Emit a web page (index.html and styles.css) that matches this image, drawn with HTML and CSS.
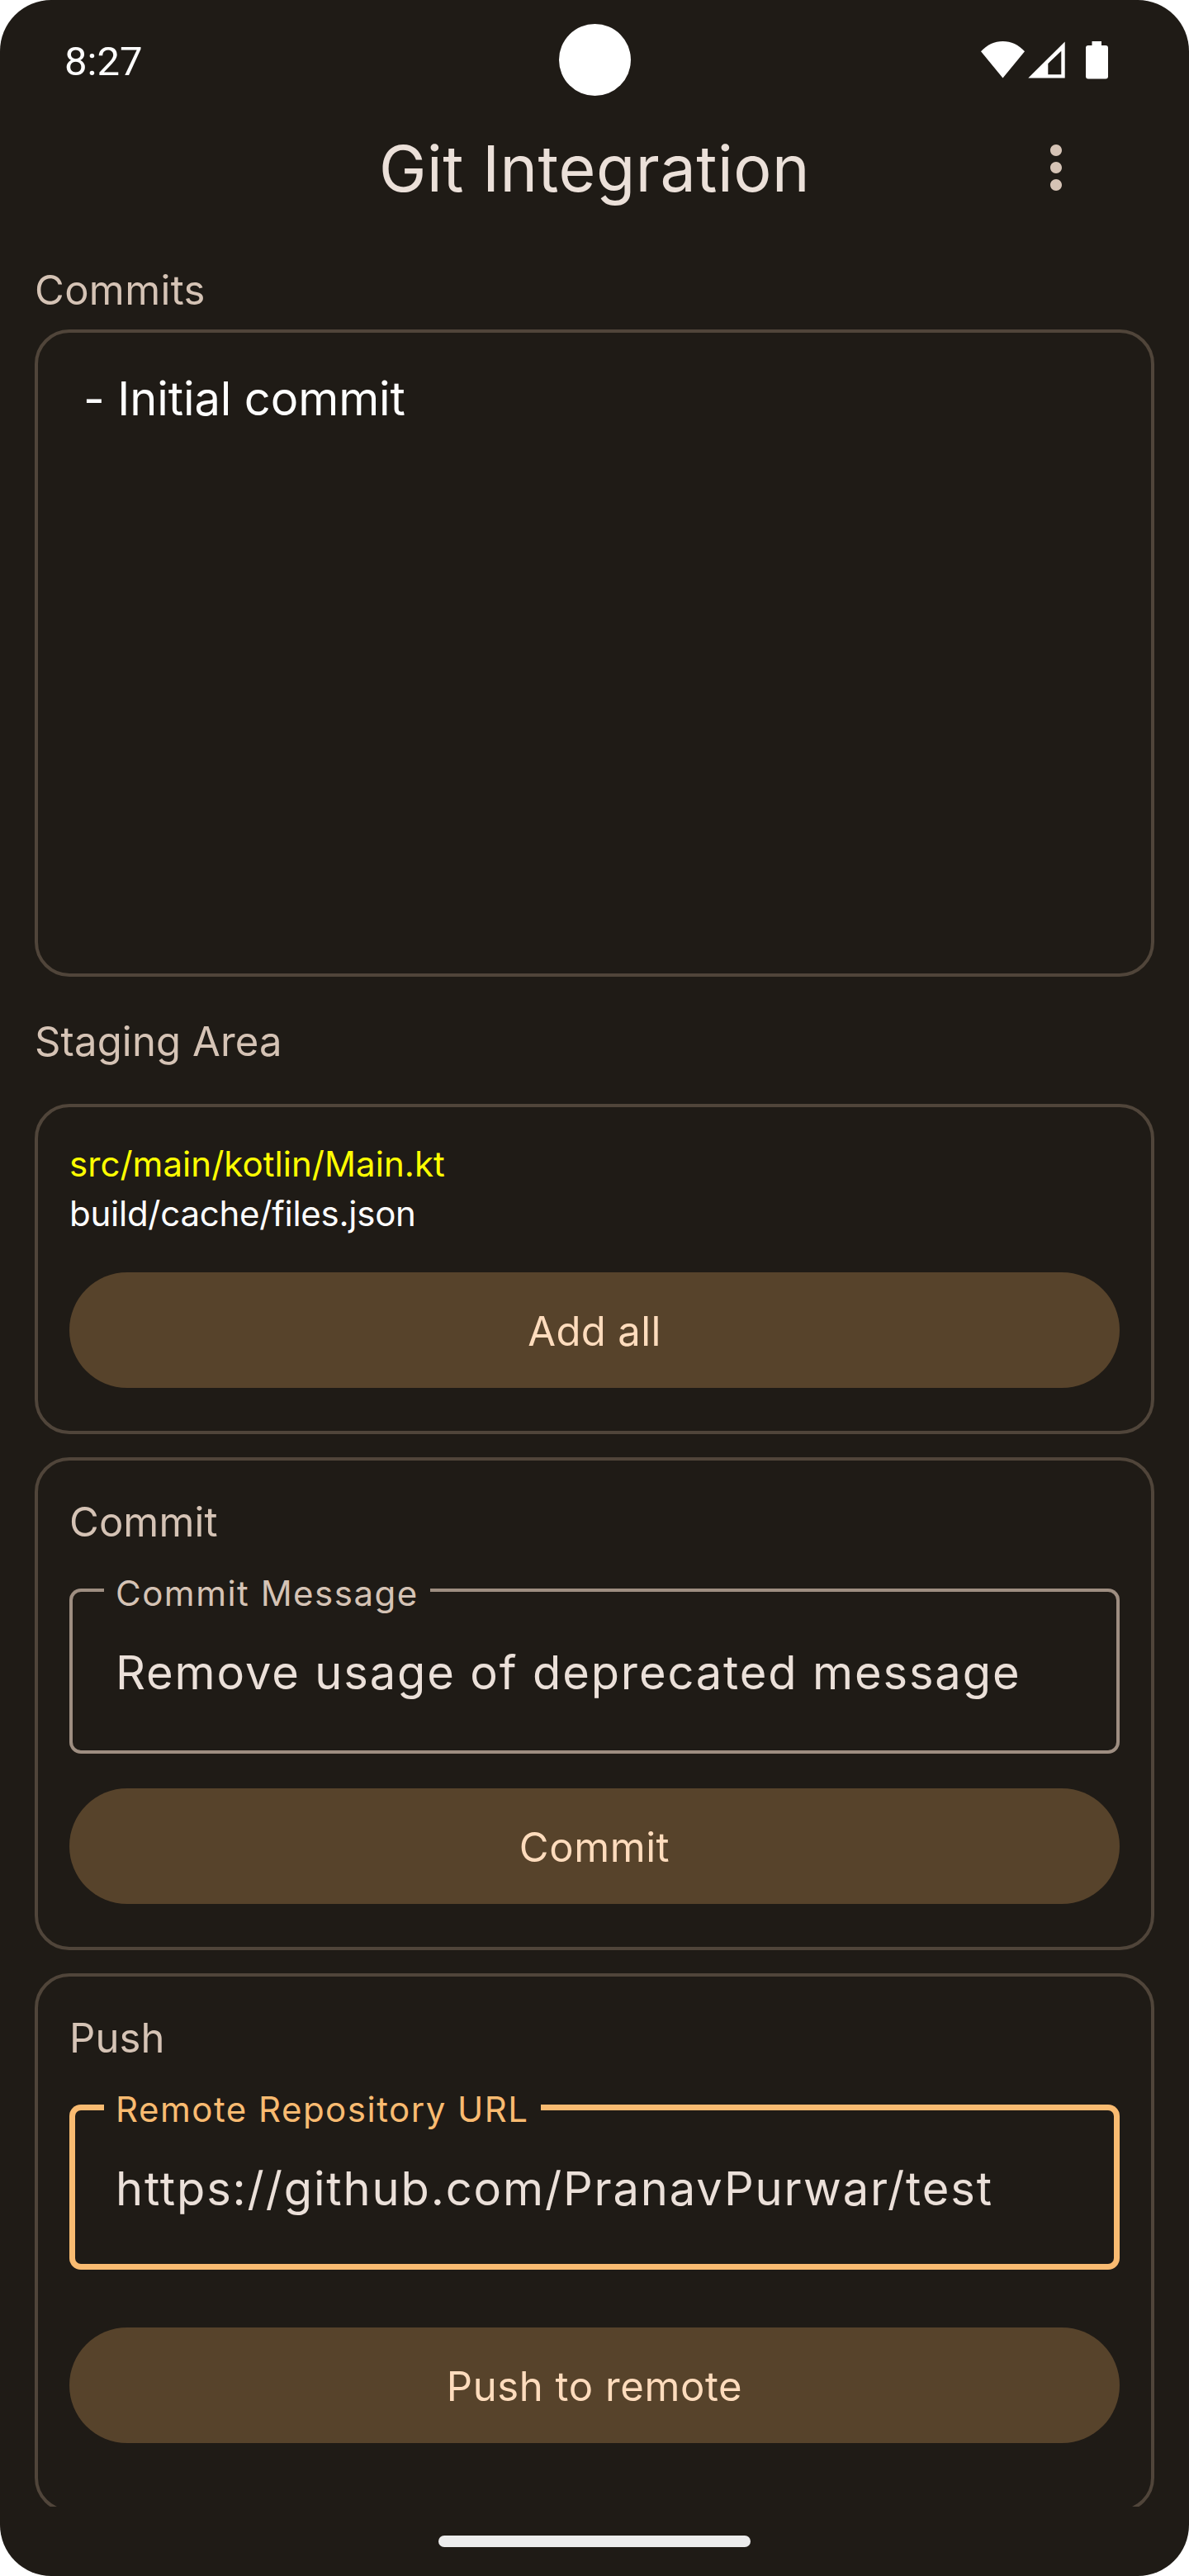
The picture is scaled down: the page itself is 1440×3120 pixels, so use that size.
FILE: index.html
```html
<!DOCTYPE html>
<html lang="en">
<head>
<meta charset="utf-8">
<title>Git Integration</title>
<link rel="stylesheet" href="styles.css">
</head>
<body>
<div class="phone">
  <div class="camera"></div>
  <header class="status-bar">
    <span class="clock">8:27</span>
    <svg class="status-icons" width="156" height="48" viewBox="0 0 156 48" fill="#fff" aria-hidden="true">
      <path d="M0 12.3C7.500 4 16.500 0 26.500 0S45.500 4 53 12.300L26.500 44.400Z"/>
      <path fill-rule="evenodd" d="M57.300 44.500L101.700 .5V44.500ZM81.300 27V40.300H97.300V11.700Z"/>
      <path d="M134.500 0H146V5H151a3 3 0 0 1 3 3V42.500a3 3 0 0 1-3 3H130a3 3 0 0 1-3-3V8a3 3 0 0 1 3-3H134.500Z"/>
    </svg>
  </header>
  <div class="app-bar">
    <h1 class="app-title">Git Integration</h1>
    <button class="menu" aria-label="More options">
      <svg width="84" height="84" viewBox="0 0 24 24" fill="currentColor"><path d="M12 8c1.100 0 2-.9 2-2s-.9-2-2-2-2 .9-2 2 .9 2 2 2zm0 2c-1.100 0-2 .9-2 2s.9 2 2 2 2-.9 2-2-.9-2-2-2zm0 6c-1.100 0-2 .9-2 2s.9 2 2 2 2-.9 2-2-.9-2-2-2z"/></svg>
    </button>
  </div>
  <main class="content">
    <h2 class="section-label">Commits</h2>
    <section class="card commits">
      <p class="commit-entry">- Initial commit</p>
    </section>
    <h2 class="section-label staging-label">Staging Area</h2>
    <section class="card staging">
      <p class="file changed">src/main/kotlin/Main.kt</p>
      <p class="file untracked">build/cache/files.json</p>
      <button class="btn">Add all</button>
    </section>
    <section class="card form commit">
      <h3 class="card-title">Commit</h3>
      <div class="field">
        <span class="field-label">Commit Message</span>
        <span class="field-value">Remove usage of deprecated message</span>
      </div>
      <button class="btn">Commit</button>
    </section>
    <section class="card form push">
      <h3 class="card-title">Push</h3>
      <div class="field focused">
        <span class="field-label">Remote Repository URL</span>
        <span class="field-value">https://github.com/PranavPurwar/test</span>
      </div>
      <button class="btn">Push to remote</button>
    </section>
  </main>
  <footer class="nav-bar"><div class="nav-handle"></div></footer>
</div>
</body>
</html>
```
FILE: styles.css
```css
:root {
  --bg: #1f1b16;
  --text: #ebe0d9;
  --text-variant: #d5c3b5;
  --outline: #9e8e81;
  --outline-variant: #50453a;
  --primary: #f9bb71;
  --tonal: #57432b;
  --on-tonal: #ffdcbd;
}

* { box-sizing: border-box; margin: 0; padding: 0; }

body { background: #fff; font-family: Inter, sans-serif; font-weight: 400; }

button { border: 0; background: none; font: inherit; }

.phone {
  position: relative;
  display: flex;
  flex-direction: column;
  width: 1440px;
  height: 3120px;
  border-radius: 62px;
  overflow: hidden;
  background: var(--bg);
  color: var(--text);
}

.camera {
  position: absolute;
  top: 29px;
  left: 677px;
  width: 87px;
  height: 87px;
  border-radius: 50%;
  background: #fff;
}

.status-bar {
  flex: none;
  display: flex;
  justify-content: space-between;
  align-items: flex-start;
  height: 144px;
  padding: 45px 96px 0 78px;
}
.clock { font: 400 49px/60px Roboto, sans-serif; color: #fff; }
.status-icons { margin-top: 5px; }

.app-bar {
  flex: none;
  display: grid;
  grid-template-columns: 1fr auto 1fr;
  align-items: center;
  height: 120px;
}
.app-title {
  grid-column: 2;
  font-size: 77px;
  font-weight: 400;
  line-height: 98px;
  letter-spacing: .58px;
}
.menu {
  justify-self: end;
  display: flex;
  margin: -2px 119px 0 0;
  color: var(--text-variant);
}

.content {
  flex: none;
  height: 2772px;
  padding: 58px 42px 0;
  overflow: hidden;
}

.section-label,
.card-title {
  font-size: 49px;
  font-weight: 400;
  line-height: 60px;
  color: var(--text-variant);
}
.section-label { letter-spacing: .35px; }
.card-title { letter-spacing: .1px; }
.staging-label { margin-top: 49px; letter-spacing: .15px; }

.card {
  display: flex;
  flex-direction: column;
  border: 4px solid var(--outline-variant);
  border-radius: 42px;
}

.commits { height: 784px; margin-top: 17px; padding: 38px 55px; }
.commit-entry { font-size: 56px; line-height: 84px; letter-spacing: -.1px; color: #fff; }

.staging { height: 400px; margin-top: 45px; padding: 39px 38px 0; }
.file { font-size: 42px; line-height: 60px; }
.changed { color: #ff0; letter-spacing: .05px; }
.untracked { color: #fff; letter-spacing: -.25px; }
.staging .btn { margin-top: 41px; letter-spacing: .4px; }

.form { margin-top: 28px; padding: 45px 38px 0; }
.commit { height: 597px; }
.push { height: 653px; }

.field {
  position: relative;
  flex: none;
  height: 200px;
  margin-top: 50px;
  padding: 60px 56px 0;
  border-radius: 14px;
  box-shadow: inset 0 0 0 4px var(--outline);
}
.field-label {
  position: absolute;
  top: -24px;
  left: 42px;
  padding: 0 14px;
  background: var(--bg);
  font-size: 42px;
  line-height: 60px;
  letter-spacing: 1.5px;
  white-space: nowrap;
  color: var(--text-variant);
}
.field-value {
  display: block;
  font-size: 56px;
  line-height: 84px;
  letter-spacing: 1.87px;
  white-space: nowrap;
}
.focused { box-shadow: inset 0 0 0 7px var(--primary); }
.focused .field-label { color: var(--primary); }

.btn {
  flex: none;
  height: 140px;
  padding-top: 4px;
  border-radius: 70px;
  background: var(--tonal);
  font-size: 49px;
  line-height: 60px;
  letter-spacing: .58px;
  color: var(--on-tonal);
}
.commit .btn { margin-top: 42px; }
.push .btn { margin-top: 70px; }

.nav-bar { display: flex; justify-content: center; padding-top: 35px; }
.nav-handle { width: 378px; height: 14px; border-radius: 7px; background: #ececec; }
```
